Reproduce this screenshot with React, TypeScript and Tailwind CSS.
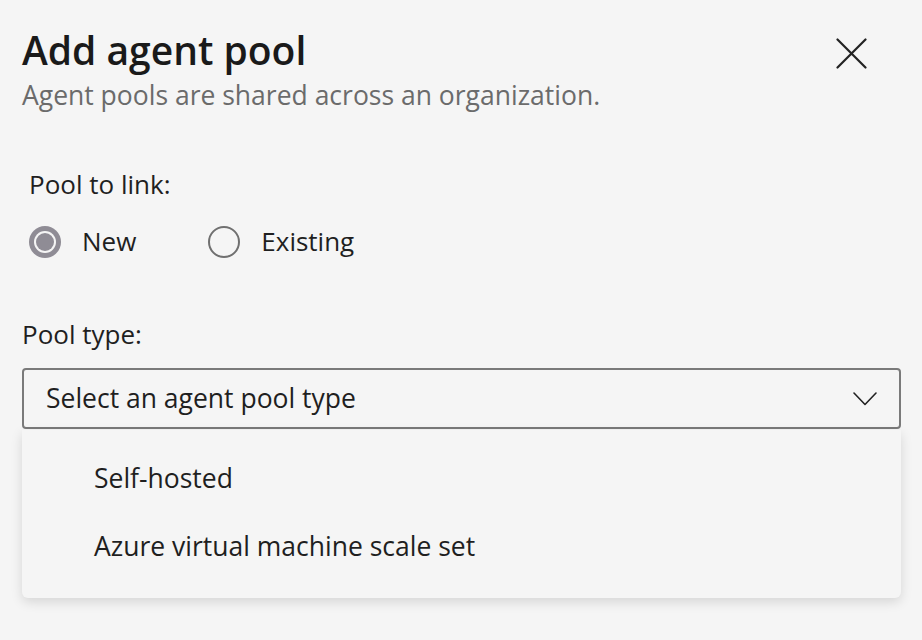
const FONT = { fontFamily: '"Open Sans", "Noto Sans", sans-serif' };

function Radio({ label, checked }: { label: string; checked?: boolean }) {
  return (
    <label className="flex items-center gap-[21px] cursor-pointer">
      {checked ? (
        <span className="flex size-[32px] items-center justify-center rounded-full bg-[#8f8c95]">
          <span className="size-[22px] rounded-full bg-[#f5f5f5] flex items-center justify-center">
            <span className="size-[18px] rounded-full bg-[#8f8c95]" />
          </span>
        </span>
      ) : (
        <span className="size-[32px] rounded-full border-2 border-[#707070]" />
      )}
      <span className="text-[26px] text-[#1f1f1f]">{label}</span>
    </label>
  );
}

export default function App() {
  return (
    <div className="min-h-[640px] w-full bg-[#f5f5f5] pl-[22px] pr-[21px] pt-[24px]" style={FONT}>
      <div className="flex items-start justify-between">
        <div>
          <h1 className="text-[39px] font-semibold leading-[52px] text-[#1a1a1a]">Add agent pool</h1>
          <p className="text-[26.5px] leading-[38px] text-[#6b6b6b]">Agent pools are shared across an organization.</p>
        </div>
        <button className="mr-[34px] mt-[14px] text-[#222]">
          <svg width="31" height="31" viewBox="0 0 31 31" fill="none" stroke="currentColor" strokeWidth="2.2" strokeLinecap="round">
            <path d="M1.5 1.5 29.5 29.5M29.5 1.5 1.5 29.5" />
          </svg>
        </button>
      </div>

      <div className="mt-[52px] pl-[7px]">
        <div className="text-[26px] leading-[36px] text-[#1f1f1f]">Pool to link:</div>
        <div className="mt-[20px] flex items-center gap-[72px]">
          <Radio label="New" checked />
          <Radio label="Existing" />
        </div>
      </div>

      <div className="mt-[55px] text-[26px] leading-[36px] text-[#1f1f1f]">Pool type:</div>
      <div className="mt-[16px] flex h-[61px] items-center justify-between rounded-[4px] border-2 border-[#7a7a7a] pl-[22px] pr-[22px]">
        <span className="text-[26.5px] text-[#1f1f1f]">Select an agent pool type</span>
        <svg width="24" height="14" viewBox="0 0 24 14" fill="none" stroke="#222" strokeWidth="1.6" strokeLinecap="round" strokeLinejoin="round">
          <path d="M1 1 12 12.5 23 1" />
        </svg>
      </div>

      <div className="mt-[1px] rounded-b-[6px] bg-[#f5f5f5] pt-[15px] pb-[17px] shadow-[0_4px_12px_rgba(0,0,0,0.13)]">
        <div className="flex h-[68px] items-center pl-[72px] text-[26.5px] text-[#1f1f1f]">Self-hosted</div>
        <div className="flex h-[68px] items-center pl-[72px] text-[26.5px] text-[#1f1f1f]">Azure virtual machine scale set</div>
      </div>
    </div>
  );
}
